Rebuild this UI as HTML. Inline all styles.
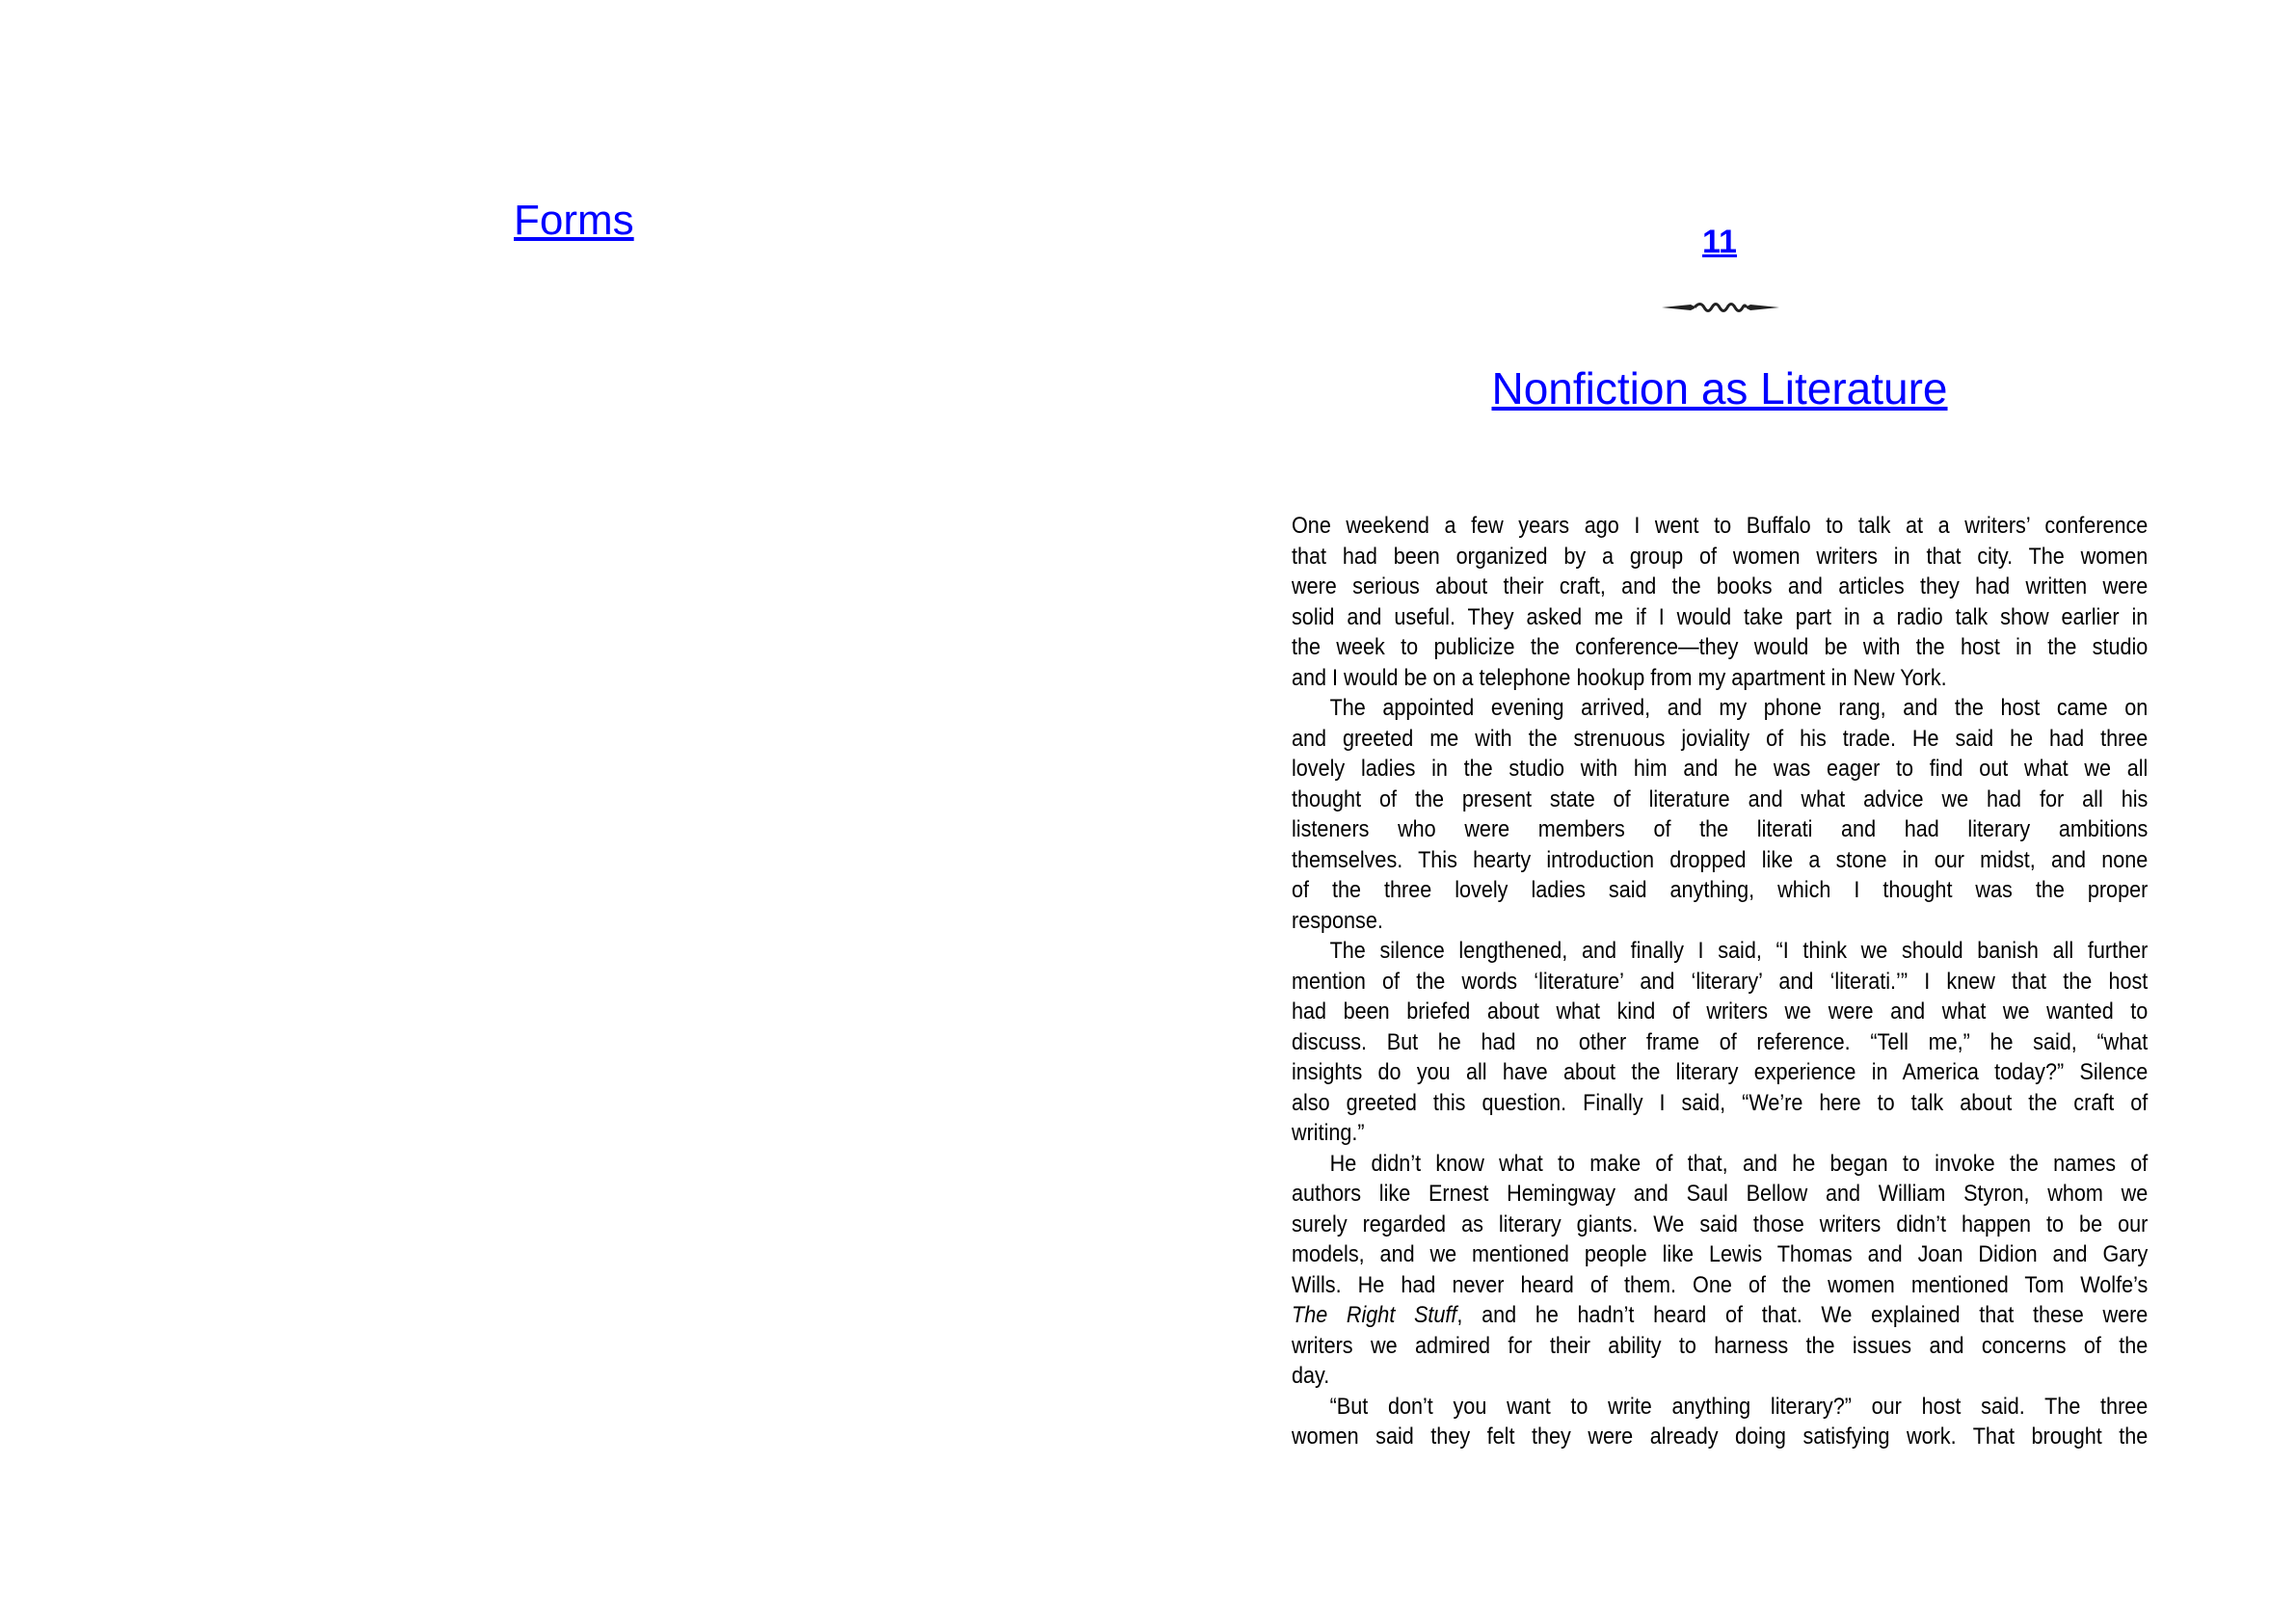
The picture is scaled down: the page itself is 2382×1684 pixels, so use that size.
<!DOCTYPE html>
<html><head><meta charset="utf-8"><style>
html,body{margin:0;padding:0;background:#fff;}
body{width:2382px;height:1684px;position:relative;overflow:hidden;font-family:"Liberation Sans",sans-serif;}
.forms{position:absolute;left:533px;top:200px;font-size:44px;line-height:58px;color:#00f;text-decoration:underline;}
.num{position:absolute;left:1684px;width:200px;text-align:center;top:229px;font-size:34px;font-weight:bold;line-height:44px;color:#00f;text-decoration:underline;}
.orn{position:absolute;left:1724px;top:308px;}
.title{position:absolute;left:1334px;width:900px;text-align:center;top:374px;font-size:46px;line-height:58px;}
.title span{display:inline-block;color:#00f;text-decoration:underline;}
.body{position:absolute;left:1340px;top:530px;width:987px;transform:scaleX(0.9);transform-origin:left top;font-size:24px;line-height:31.5px;color:#000;}
.j{text-align:justify;text-align-last:justify;}
.l{text-align:left;}
.i{text-indent:44px;}
</style></head><body>
<div class="forms">Forms</div>
<div class="num">11</div>
<svg class="orn" width="122" height="22" viewBox="0 0 122 22">
<path d="M0 11 L30 8 L34 10 L34 12 L30 14 Z" fill="#222"/>
<path d="M122 11 L92 8 L88 10 L88 12 L92 14 Z" fill="#222"/>
<path d="M34 11 Q40 4 44 11 Q48 18 52 11 Q56 4 60 11 Q64 18 68 11 Q72 4 76 11 Q80 18 84 11 Q86 7 88 11" stroke="#222" stroke-width="3" fill="none"/>
</svg>
<div class="title"><span>Nonfiction as Literature</span></div>
<div class="body">
<div class="j">One weekend a few years ago I went to Buffalo to talk at a writers’ conference</div>
<div class="j">that had been organized by a group of women writers in that city. The women</div>
<div class="j">were serious about their craft, and the books and articles they had written were</div>
<div class="j">solid and useful. They asked me if I would take part in a radio talk show earlier in</div>
<div class="j">the week to publicize the conference—they would be with the host in the studio</div>
<div class="l">and I would be on a telephone hookup from my apartment in New York.</div>
<div class="j i">The appointed evening arrived, and my phone rang, and the host came on</div>
<div class="j">and greeted me with the strenuous joviality of his trade. He said he had three</div>
<div class="j">lovely ladies in the studio with him and he was eager to find out what we all</div>
<div class="j">thought of the present state of literature and what advice we had for all his</div>
<div class="j">listeners who were members of the literati and had literary ambitions</div>
<div class="j">themselves. This hearty introduction dropped like a stone in our midst, and none</div>
<div class="j">of the three lovely ladies said anything, which I thought was the proper</div>
<div class="l">response.</div>
<div class="j i">The silence lengthened, and finally I said, “I think we should banish all further</div>
<div class="j">mention of the words ‘literature’ and ‘literary’ and ‘literati.’” I knew that the host</div>
<div class="j">had been briefed about what kind of writers we were and what we wanted to</div>
<div class="j">discuss. But he had no other frame of reference. “Tell me,” he said, “what</div>
<div class="j">insights do you all have about the literary experience in America today?” Silence</div>
<div class="j">also greeted this question. Finally I said, “We’re here to talk about the craft of</div>
<div class="l">writing.”</div>
<div class="j i">He didn’t know what to make of that, and he began to invoke the names of</div>
<div class="j">authors like Ernest Hemingway and Saul Bellow and William Styron, whom we</div>
<div class="j">surely regarded as literary giants. We said those writers didn’t happen to be our</div>
<div class="j">models, and we mentioned people like Lewis Thomas and Joan Didion and Gary</div>
<div class="j">Wills. He had never heard of them. One of the women mentioned Tom Wolfe’s</div>
<div class="j"><i>The Right Stuff</i>, and he hadn’t heard of that. We explained that these were</div>
<div class="j">writers we admired for their ability to harness the issues and concerns of the</div>
<div class="l">day.</div>
<div class="j i">“But don’t you want to write anything literary?” our host said. The three</div>
<div class="j">women said they felt they were already doing satisfying work. That brought the</div>
</div>
</body></html>
